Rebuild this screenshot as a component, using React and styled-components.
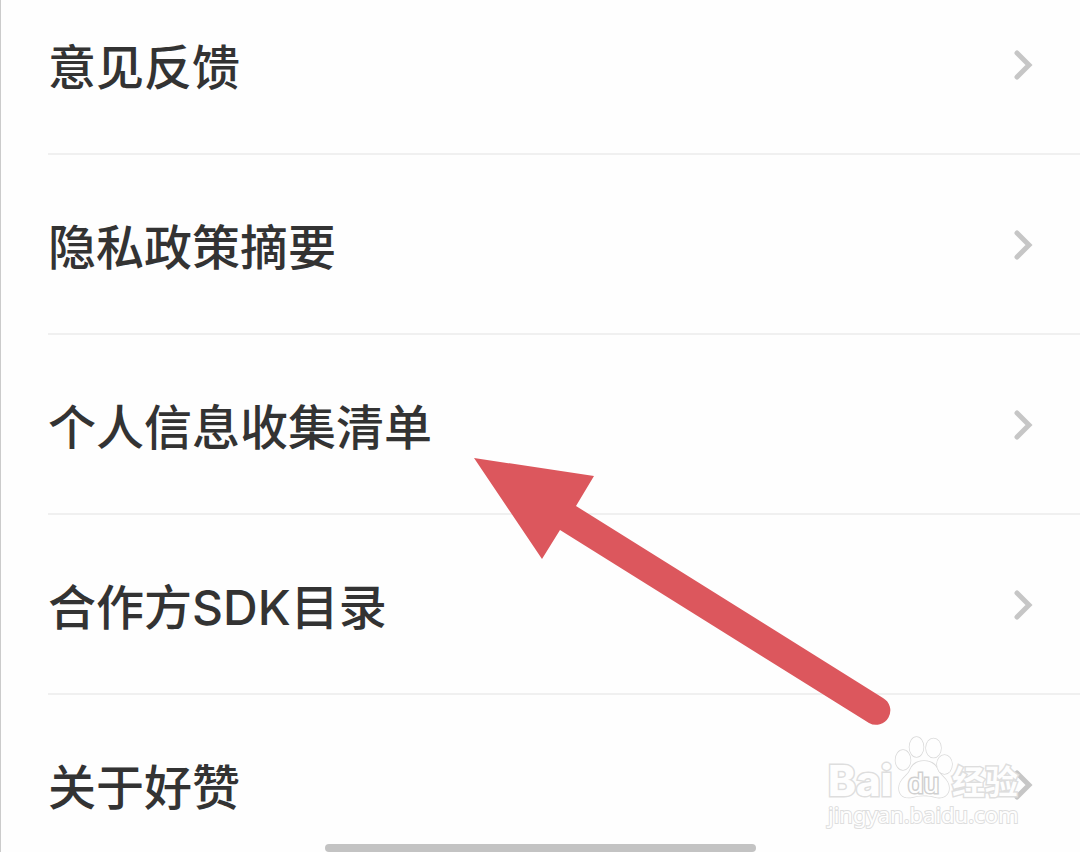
import React from "react";
import styled, { createGlobalStyle } from "styled-components";

const GlobalStyle = createGlobalStyle`
  body {
    margin: 0;
    background: #fefefe;
  }
`;

const Page = styled.main`
  position: relative;
  box-sizing: border-box;
  min-height: 100vh;
  overflow: hidden;
  border-left: 1px solid #cbcbcb;
  font-family: Inter, "Noto Sans CJK SC", sans-serif;
`;

const List = styled.ul`
  margin: 0;
  padding: 0 0 0 47px;
  list-style: none;
`;

const Item = styled.li`
  border-bottom: 2px solid #f0f0f0;

  &:last-child {
    border-bottom: none;
  }
`;

const Row = styled.a`
  display: flex;
  align-items: center;
  justify-content: space-between;
  padding: 63px 47px 61px 0;
  color: #333;
  text-decoration: none;

  ${Item}:first-child & {
    padding-top: 38px;
  }

  ${Item}:last-child & {
    padding-bottom: 40px;
  }
`;

const Label = styled.span`
  padding-top: 6px;
  font-size: 48px;
  font-weight: 500;
  line-height: 48px;
`;

const Chevron = styled.svg`
  width: 20px;
  height: 32px;
  fill: none;
  stroke: #c6c6c6;
  stroke-width: 5;
  stroke-linecap: round;
`;

const Arrow = styled.svg`
  position: absolute;
  top: 458px;
  left: 472px;
  width: 418px;
  height: 268px;
  fill: #dc575d;
  pointer-events: none;
`;

const Watermark = styled.a`
  position: absolute;
  right: 58px;
  top: 736px;
  width: 194px;
  color: #fefefe;
  text-decoration: none;
  -webkit-text-stroke: 3px #dedede;
  paint-order: stroke fill;
`;

const Brand = styled.span`
  display: flex;
  align-items: flex-end;
  height: 64px;
`;

const Bai = styled.span`
  width: 68px;
  font: 800 42px/38px Inter, sans-serif;
`;

const Paw = styled.svg`
  flex: none;
  width: 56px;
  height: 64px;
  fill: #fefefe;
  stroke: #dadada;
  stroke-width: 1.5;
  overflow: visible;

  text {
    font: 28px "Liberation Sans", sans-serif;
    stroke: #d0d0d0;
    -webkit-text-stroke: 0;
    stroke-width: 3;
  }
`;

const Jingyan = styled.span`
  font: bold 33px/40px "Noto Sans CJK SC", sans-serif;
`;

const Site = styled.span`
  display: block;
  font: 22px/28px "Noto Sans", sans-serif;
  -webkit-text-stroke: 2px #dedede;
`;

const HomeBar = styled.div`
  position: absolute;
  bottom: 0;
  left: 30%;
  width: 40%;
  height: 8px;
  border-radius: 4px;
  background: #c3c3c3;
`;

const items = [
  "意见反馈",
  "隐私政策摘要",
  "个人信息收集清单",
  "合作方SDK目录",
  "关于好赞"
];

export default function App() {
  return (
    <Page lang="zh-CN">
      <GlobalStyle />
      <List>
        {items.map(label => (
          <Item key={label}>
            <Row href="#">
              <Label>{label}</Label>
              <Chevron viewBox="0 0 20 32" aria-hidden="true">
                <path d="M4 4L16 16L4 28" />
              </Chevron>
            </Row>
          </Item>
        ))}
      </List>
      <Arrow viewBox="473 458 418 268" aria-hidden="true">
        <path d="M474 458L594 476L576 506L883 698A14 14 0 0 1 869 723L560 530L542 559Z" />
      </Arrow>
      <Watermark href="#">
        <Brand>
          <Bai>Bai</Bai>
          <Paw viewBox="0 0 56 64">
            <path d="M28 25C35 25 40 29 42 34C44 40 53 43 53 52C53 60 46 63 39 61C31 59 24 59 17 61C9 63 3 60 3 52C3 43 12 40 14 34C16 29 21 25 28 25Z" />
            <ellipse cx="7" cy="24" rx="7.5" ry="10" />
            <ellipse cx="20.5" cy="11" rx="7" ry="10" />
            <ellipse cx="37.5" cy="12" rx="7.5" ry="9.5" />
            <ellipse cx="48.5" cy="28.5" rx="7.5" ry="9.5" />
            <text x="12" y="57">
              du
            </text>
          </Paw>
          <Jingyan>经验</Jingyan>
        </Brand>
        <Site>jingyan.baidu.com</Site>
      </Watermark>
      <HomeBar />
    </Page>
  );
}
